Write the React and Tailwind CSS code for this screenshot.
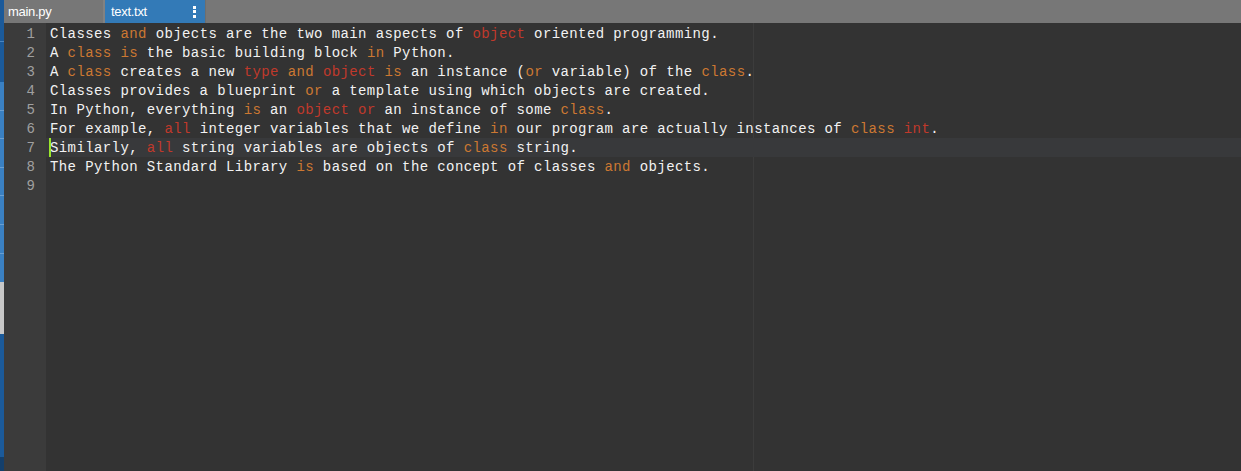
const O = 'o';
const R = 'r';

const lines = [
  ['Classes ', [O, 'and'], ' objects are the two main aspects of ', [R, 'object'], ' oriented programming.'],
  ['A ', [O, 'class'], ' ', [O, 'is'], ' the basic building block ', [O, 'in'], ' Python.'],
  ['A ', [O, 'class'], ' creates a new ', [R, 'type'], ' ', [O, 'and'], ' ', [R, 'object'], ' ', [O, 'is'], ' an instance (', [O, 'or'], ' variable) of the ', [O, 'class'], '.'],
  ['Classes provides a blueprint ', [O, 'or'], ' a template using which objects are created.'],
  ['In Python, everything ', [O, 'is'], ' an ', [R, 'object'], ' ', [R, 'or'], ' an instance of some ', [O, 'class'], '.'],
  ['For example, ', [R, 'all'], ' integer variables that we define ', [O, 'in'], ' our program are actually instances of ', [O, 'class'], ' ', [R, 'int'], '.'],
  ['Similarly, ', [R, 'all'], ' string variables are objects of ', [O, 'class'], ' string.'],
  ['The Python Standard Library ', [O, 'is'], ' based on the concept of classes ', [O, 'and'], ' objects.'],
  [],
];

const strip = [
  ['h-[41px]', 'bg-[#1b5a9a]'],
  ['h-[1px]', 'bg-[#4b85bf]'],
  ['h-[40px]', 'bg-[#1b5a9a]'],
  ['h-[28px]', 'bg-[#3a80c2]'],
  ['h-[1px]', 'bg-[#6a9fd2]'],
  ['h-[27px]', 'bg-[#3a80c2]'],
  ['h-[1px]', 'bg-[#6a9fd2]'],
  ['h-[28px]', 'bg-[#3a80c2]'],
  ['h-[1px]', 'bg-[#6a9fd2]'],
  ['h-[27px]', 'bg-[#3a80c2]'],
  ['h-[1px]', 'bg-[#6a9fd2]'],
  ['h-[28px]', 'bg-[#3a80c2]'],
  ['h-[1px]', 'bg-[#6a9fd2]'],
  ['h-[28px]', 'bg-[#3a80c2]'],
  ['h-[1px]', 'bg-[#6a9fd2]'],
  ['h-[28px]', 'bg-[#3a80c2]'],
  ['h-[52px]', 'bg-[#c8c8c8]'],
  ['h-[123px]', 'bg-[#1b5a9a]'],
  ['h-[14px]', 'bg-[#143f6b]'],
];

function Token({ part }) {
  if (typeof part === 'string') return <span>{part}</span>;
  const [kind, text] = part;
  return <span className={kind === O ? 'text-[#cc7832]' : 'text-[#c0392b]'}>{text}</span>;
}

export default function App() {
  return (
    <div className="flex h-[471px] w-full overflow-hidden bg-[#333333]">
      <div className="flex w-[4px] shrink-0 flex-col">
        {strip.map(([h, bg], i) => (
          <div key={i} className={`${h} ${bg} shrink-0`} />
        ))}
      </div>

      <div className="flex min-w-0 flex-1 flex-col">
        {/* tabs */}
        <div className="flex h-[23px] shrink-0 bg-[#777777] text-[13px] text-white" style={{ fontFamily: '"Liberation Sans", Arial, sans-serif' }}>
          <div className="flex w-[99px] items-center pl-[4px] tracking-[-0.3px]">main.py</div>
          <div className="w-[2px] bg-[#828282]" />
          <div className="flex w-[100px] items-center justify-between bg-[#337ab7] pl-[6px] pr-[9px] tracking-[-0.3px]">
            <span>text.txt</span>
            <span className="flex flex-col gap-[1.5px]">
              <span className="h-[3px] w-[3px] bg-white" />
              <span className="h-[3px] w-[3px] bg-white" />
              <span className="h-[3px] w-[3px] bg-white" />
            </span>
          </div>
          <div className="w-[1px] bg-[#6e6e6e]" />
        </div>

        {/* editor */}
        <div
          className="flex flex-1 text-[14px] leading-[19px]"
          style={{ fontFamily: '"Liberation Mono", "DejaVu Sans Mono", monospace' }}
        >
          <div className="w-[42px] shrink-0 bg-[#3b3b3b] pt-[1px] pr-[11px] text-right text-[#a0a0a0]">
            {lines.map((_, i) => (
              <div key={i} className="h-[19px] pt-[1px]">{i + 1}</div>
            ))}
          </div>
          <div className="relative flex-1 pt-[1px]">
            <div className="absolute top-0 bottom-0 left-[707px] w-[1px] bg-[#3c3c3c]" />
            {lines.map((parts, i) => (
              <div
                key={i}
                className={`relative h-[19px] whitespace-pre pl-[4px] pt-[1px] text-[#f2f2f2] ${i === 6 ? 'bg-[#38393b]' : ''}`}
              >
                {i === 6 && <span className="absolute left-[3px] top-0 h-[19px] w-[2px] bg-[#9ae62b]" />}
                <span className="tracking-[0.4px]">
                  {parts.map((p, j) => (
                    <Token key={j} part={p} />
                  ))}
                </span>
              </div>
            ))}
          </div>
        </div>
      </div>
    </div>
  );
}
